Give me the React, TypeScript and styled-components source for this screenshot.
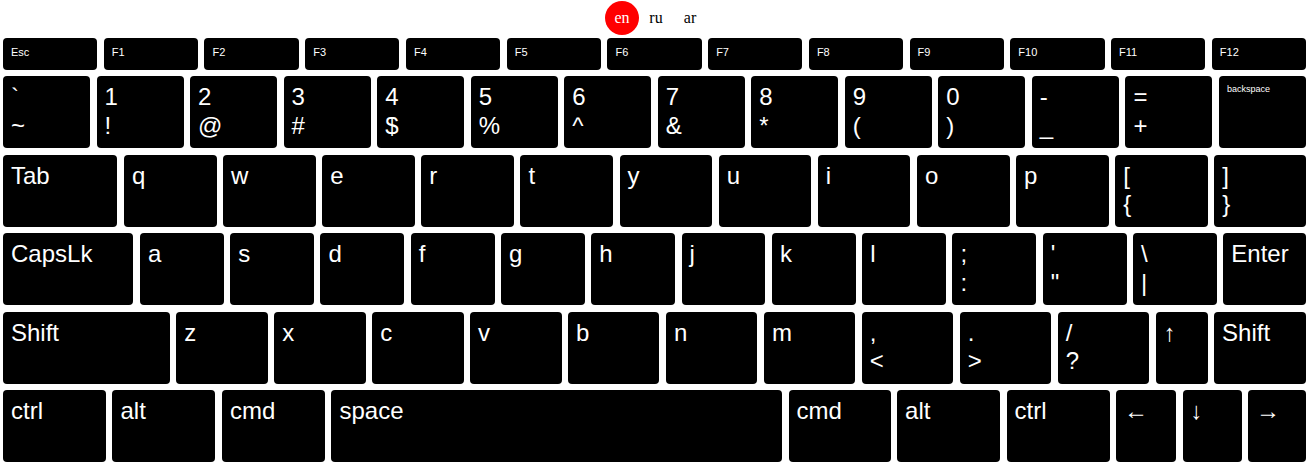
import React from 'react';
import styled, { createGlobalStyle } from 'styled-components';

type KeyDef = {
  top: string;
  bottom?: string;
  grow: number;
  size?: 'fn' | 'tiny' | 'normal';
};

const fnRow: KeyDef[] = ['Esc', 'F1', 'F2', 'F3', 'F4', 'F5', 'F6', 'F7', 'F8', 'F9', 'F10', 'F11', 'F12'].map((k) => ({
  top: k,
  grow: 95,
  size: 'fn',
}));

const numberRow: KeyDef[] = [
  { top: '`', bottom: '~', grow: 87 },
  { top: '1', bottom: '!', grow: 87 },
  { top: '2', bottom: '@', grow: 87 },
  { top: '3', bottom: '#', grow: 87 },
  { top: '4', bottom: '$', grow: 87 },
  { top: '5', bottom: '%', grow: 87 },
  { top: '6', bottom: '^', grow: 87 },
  { top: '7', bottom: '&', grow: 87 },
  { top: '8', bottom: '*', grow: 87 },
  { top: '9', bottom: '(', grow: 87 },
  { top: '0', bottom: ')', grow: 87 },
  { top: '-', bottom: '_', grow: 87 },
  { top: '=', bottom: '+', grow: 87 },
  { top: 'backspace', grow: 87, size: 'tiny' },
];

const letter = (k: string, grow: number): KeyDef => ({ top: k, grow });

const tabRow: KeyDef[] = [
  letter('Tab', 115),
  ...'qwertyuiop'.split('').map((k) => letter(k, 93)),
  { top: '[', bottom: '{', grow: 93 },
  { top: ']', bottom: '}', grow: 92 },
];

const capsRow: KeyDef[] = [
  letter('CapsLk', 131),
  ...'asdfghjkl'.split('').map((k) => letter(k, 84)),
  { top: ';', bottom: ':', grow: 84 },
  { top: "'", bottom: '"', grow: 84 },
  { top: '\\', bottom: '|', grow: 84 },
  letter('Enter', 83),
];

const shiftRow: KeyDef[] = [
  letter('Shift', 167),
  ...'zxcvbnm'.split('').map((k) => letter(k, 91.5)),
  { top: ',', bottom: '<', grow: 91.5 },
  { top: '.', bottom: '>', grow: 91.5 },
  { top: '/', bottom: '?', grow: 91.5 },
  letter('↑', 52),
  letter('Shift', 92),
];

const bottomRow: KeyDef[] = [
  letter('ctrl', 103),
  letter('alt', 103),
  letter('cmd', 103),
  letter('space', 451),
  letter('cmd', 102),
  letter('alt', 103),
  letter('ctrl', 103),
  letter('←', 60),
  letter('↓', 59),
  letter('→', 58),
];

const rows = [numberRow, tabRow, capsRow, shiftRow, bottomRow];
const langs = ['en', 'ru', 'ar'];

const App: React.FC = () => {
  return (
    <Page>
      <GlobalStyle />
      <LangBar>
        {langs.map((lang) => (
          <LangButton key={lang} $active={lang === 'en'}>
            {lang}
          </LangButton>
        ))}
      </LangBar>

      <Keyboard>
        <FnRow>
          {fnRow.map((k) => (
            <Key key={k.top} $grow={k.grow} $size="fn">
              {k.top}
            </Key>
          ))}
        </FnRow>

        {rows.map((row, i) => (
          <Row key={i}>
            {row.map((k, j) => (
              <Key key={j} $grow={k.grow} $size={k.size || 'normal'}>
                <span>{k.top}</span>
                {k.bottom && <span>{k.bottom}</span>}
              </Key>
            ))}
          </Row>
        ))}
      </Keyboard>
    </Page>
  );
};

const GlobalStyle = createGlobalStyle`
  html, body {
    margin: 0;
    padding: 0;
    background: #fff;
  }
`;

const Page = styled.div`
  width: 1312px;
  display: flex;
  flex-direction: column;
`;

const LangBar = styled.div`
  display: flex;
  justify-content: center;
  padding-top: 1px;
  margin-bottom: 3px;
`;

const LangButton = styled.div<{ $active?: boolean }>`
  width: 34px;
  height: 34px;
  border-radius: 50%;
  display: flex;
  align-items: center;
  justify-content: center;
  font-family: 'Liberation Serif', 'Times New Roman', serif;
  font-size: 16px;
  background: ${(p) => (p.$active ? '#ff0000' : 'transparent')};
  color: ${(p) => (p.$active ? '#fff' : '#000')};
  cursor: pointer;
`;

const Keyboard = styled.div`
  display: flex;
  flex-direction: column;
  gap: 6.5px;
  padding: 0 6px 0 3px;
`;

const Row = styled.div`
  display: flex;
  gap: 6.5px;
  height: 72px;
`;

const FnRow = styled(Row)`
  height: 32px;
  margin-bottom: -0.5px;
`;

const sizes = {
  fn: '11px',
  tiny: '9px',
  normal: '24px',
};

const Key = styled.div<{ $grow: number; $size: 'fn' | 'tiny' | 'normal' }>`
  flex: ${(p) => `${p.$grow} ${p.$grow} ${p.$grow}px`};
  min-width: 0;
  background: #000;
  color: #fff;
  border-radius: 4px;
  box-sizing: border-box;
  padding: ${(p) => (p.$size === 'normal' ? '7px 8px' : '8px')};
  display: flex;
  flex-direction: column;
  font-family: 'Liberation Sans', Arial, sans-serif;
  font-size: ${(p) => sizes[p.$size]};
  line-height: ${(p) => (p.$size === 'normal' ? '1.2' : 'normal')};
  white-space: nowrap;
  overflow: hidden;
`;

export default App;
